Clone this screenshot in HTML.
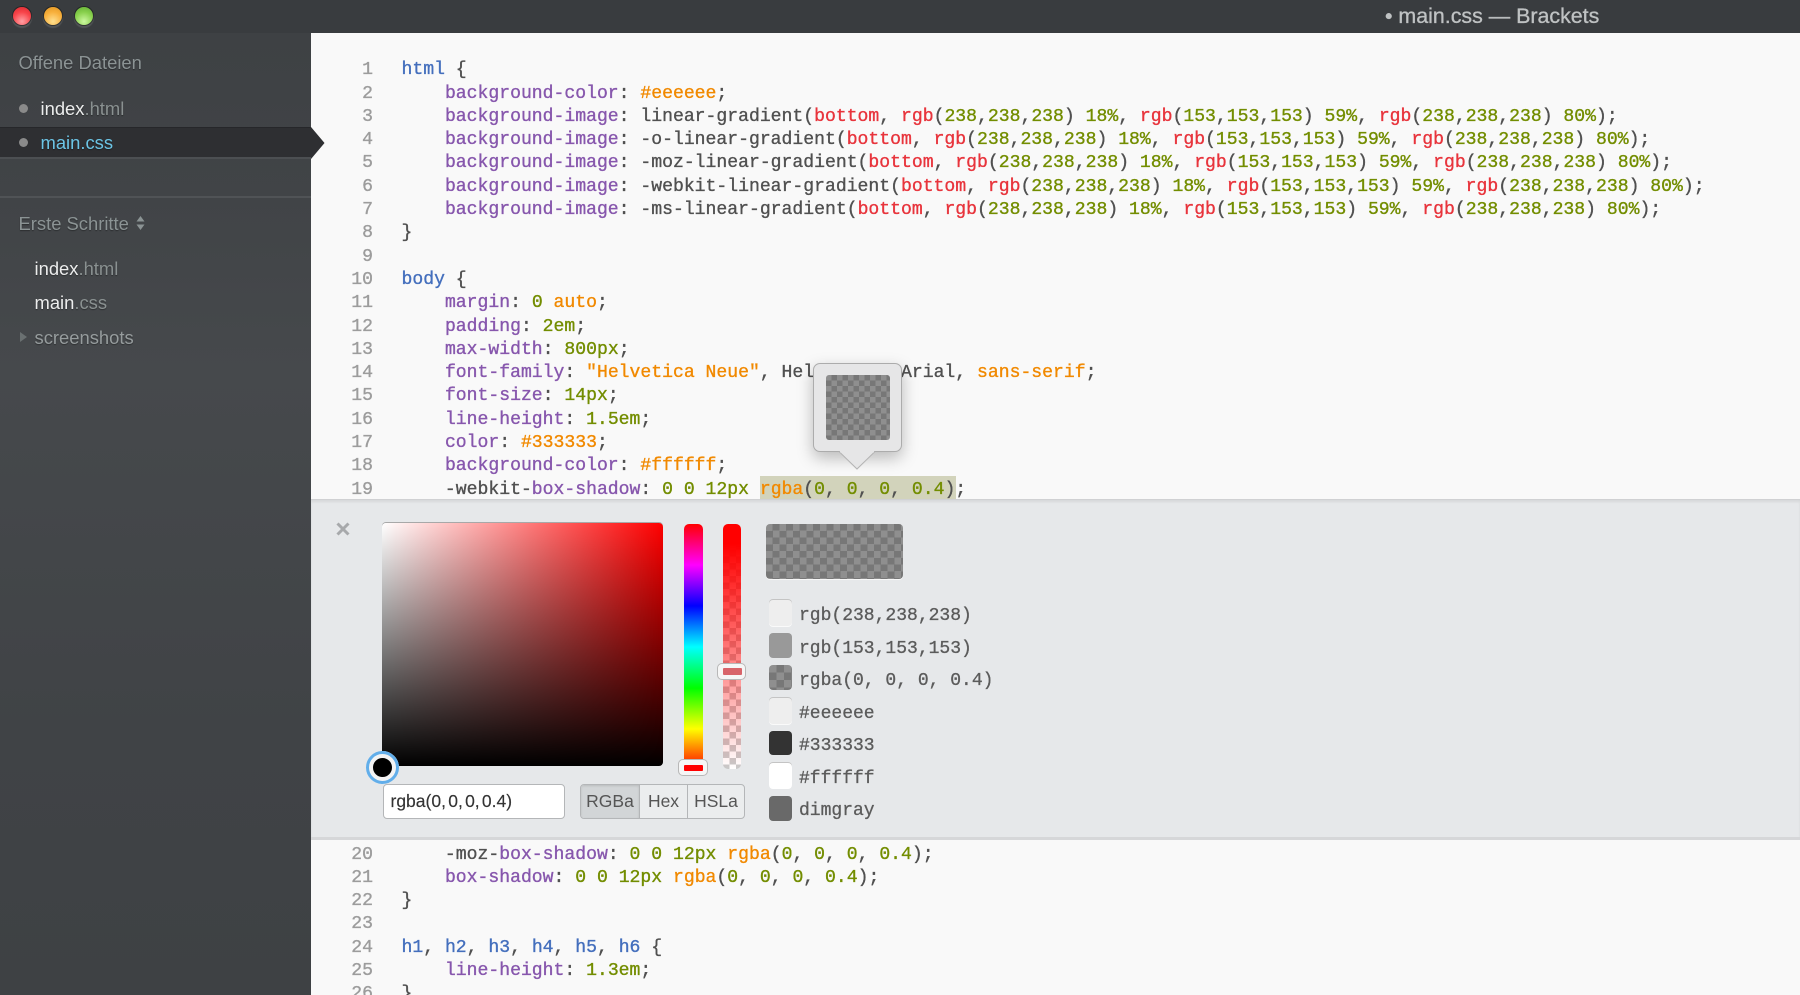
<!DOCTYPE html>
<html><head><meta charset="utf-8"><title>main.css — Brackets</title>
<style>
html,body{margin:0;padding:0;width:1800px;height:995px;overflow:hidden;background:#f9f9f9}
*{box-sizing:border-box}
.a{position:absolute}
#title{left:0;top:0;width:1800px;height:33px;background:#393c3f;z-index:3}
.tl{position:absolute;top:7px;width:18px;height:18px;border-radius:50%;box-shadow:0 0 0 1px rgba(0,0,0,.4),0 2px 1px 1px rgba(255,255,255,.13)}
#side{left:0;top:33px;width:311px;height:962px;background:linear-gradient(#3e4144 0,#414447 165px,#46494c 340px,#404346 700px,#3e4144 100%);font-family:"Liberation Sans",sans-serif;font-size:18.4px;z-index:2}
.s{position:absolute;white-space:pre;line-height:24px;height:24px;text-shadow:0 1px 1px rgba(0,0,0,.35)}
.h{color:#8b9394}.w{color:#eceded}.g{color:#8a9191}
#code,#code2{font-family:"Liberation Mono",monospace;font-size:18.1px;color:#505050;-webkit-text-stroke:.35px}
.l{position:absolute;left:0;height:24px;line-height:24px;white-space:pre}
.ln{position:absolute;left:332px;width:41px;text-align:right;color:#9c9c9c;height:24px;line-height:24px}
.c{left:401.5px}
.p{color:#8757ad}.t{color:#446fbd}.n{color:#738d00}.o{color:#f18900}.r{color:#e8343c}
#panel{left:311px;top:499px;width:1489px;height:341px;background:#e6e8ea;border-top:1px solid #d0d1d3;box-shadow:inset 0 2px 2px rgba(0,0,0,.07);border-bottom:3px solid #d6d7d9;z-index:1}
.sw{position:absolute;left:769px;width:23px;border-radius:4px}
.st{position:absolute;left:799px;font-family:"Liberation Mono",monospace;font-size:18px;color:#5b5b5b;white-space:pre;line-height:24px;height:24px;-webkit-text-stroke:.3px}
.chk{background-color:#8f8f8f;background-image:conic-gradient(#777 25%,transparent 0 50%,#777 0 75%,transparent 0)}
</style></head><body>

<div class="a" id="title">
 <div class="tl" style="left:13px;background:radial-gradient(circle at 50% 80%,#ffa0a4,#f8444a 55%,#d8282e)"></div>
 <div class="tl" style="left:44px;background:radial-gradient(circle at 50% 80%,#ffe090,#f8b03c 55%,#e09420)"></div>
 <div class="tl" style="left:75px;background:radial-gradient(circle at 50% 80%,#ccf8a0,#88d04c 55%,#60ac34)"></div>
 <div class="a" style="left:1385px;top:4px;font:21.4px/24px 'Liberation Sans',sans-serif;color:#bfc2c3;white-space:pre;-webkit-text-stroke:.3px">• main.css — Brackets</div>
</div>

<div class="a" id="side">
 <div class="s h" style="left:18.5px;top:18px">Offene Dateien</div>
 <div class="a" style="left:18.5px;top:71px;width:9px;height:9px;border-radius:50%;background:#8a8a8a"></div>
 <div class="s" style="left:40.5px;top:64px"><span class="w">index</span><span class="g">.html</span></div>
 <div class="a" style="left:0;top:94px;width:311px;height:32px;background:#2e2f32;border-top:1px solid #26272a;border-bottom:2px solid #4c4f52;background-clip:border-box"></div>
 <svg class="a" style="left:311px;top:94px" width="14" height="32"><path d="M0 0L13.5 16L0 32Z" fill="#2e2f32"/></svg>
 <div class="a" style="left:18.5px;top:105px;width:9px;height:9px;border-radius:50%;background:#8a8a8a"></div>
 <div class="s" style="left:40.5px;top:98px;color:#6cc5e6">main.css</div>
 <div class="a" style="left:0;top:163px;width:311px;height:2px;background:#505356"></div>
 <div class="s h" style="left:18.5px;top:179px">Erste Schritte</div>
 <svg class="a" style="left:136px;top:183px" width="9" height="15"><path d="M4.5 0L8.5 5.5H.5ZM4.5 14L.5 8.5H8.5Z" fill="#8b9394"/></svg>
 <div class="s" style="left:34.5px;top:224px"><span class="w">index</span><span class="g">.html</span></div>
 <div class="s" style="left:34.5px;top:258px"><span class="w">main</span><span class="g">.css</span></div>
 <svg class="a" style="left:20px;top:298px" width="8" height="12"><path d="M0 1L7 6L0 11Z" fill="#6a7071"/></svg>
 <div class="s g" style="left:34.5px;top:292.5px;color:#969c9d">screenshots</div>
</div>

<div class="a" id="code" style="left:0;top:1.3px;width:1800px;height:497.7px;overflow:hidden">
<span class="ln" style="top:57px">1</span><div class="l c" style="top:57px"><span class="t">html</span> {</div>
<span class="ln" style="top:80.3px">2</span><div class="l c" style="top:80.3px">    <span class="p">background-color</span>: <span class="o">#eeeeee</span>;</div>
<span class="ln" style="top:103.6px">3</span><div class="l c" style="top:103.6px">    <span class="p">background-image</span>: linear-gradient(<span class="r">bottom</span>, <span class="r">rgb</span>(<span class="n">238</span>,<span class="n">238</span>,<span class="n">238</span>) <span class="n">18%</span>, <span class="r">rgb</span>(<span class="n">153</span>,<span class="n">153</span>,<span class="n">153</span>) <span class="n">59%</span>, <span class="r">rgb</span>(<span class="n">238</span>,<span class="n">238</span>,<span class="n">238</span>) <span class="n">80%</span>);</div>
<span class="ln" style="top:126.9px">4</span><div class="l c" style="top:126.9px">    <span class="p">background-image</span>: -o-linear-gradient(<span class="r">bottom</span>, <span class="r">rgb</span>(<span class="n">238</span>,<span class="n">238</span>,<span class="n">238</span>) <span class="n">18%</span>, <span class="r">rgb</span>(<span class="n">153</span>,<span class="n">153</span>,<span class="n">153</span>) <span class="n">59%</span>, <span class="r">rgb</span>(<span class="n">238</span>,<span class="n">238</span>,<span class="n">238</span>) <span class="n">80%</span>);</div>
<span class="ln" style="top:150.2px">5</span><div class="l c" style="top:150.2px">    <span class="p">background-image</span>: -moz-linear-gradient(<span class="r">bottom</span>, <span class="r">rgb</span>(<span class="n">238</span>,<span class="n">238</span>,<span class="n">238</span>) <span class="n">18%</span>, <span class="r">rgb</span>(<span class="n">153</span>,<span class="n">153</span>,<span class="n">153</span>) <span class="n">59%</span>, <span class="r">rgb</span>(<span class="n">238</span>,<span class="n">238</span>,<span class="n">238</span>) <span class="n">80%</span>);</div>
<span class="ln" style="top:173.5px">6</span><div class="l c" style="top:173.5px">    <span class="p">background-image</span>: -webkit-linear-gradient(<span class="r">bottom</span>, <span class="r">rgb</span>(<span class="n">238</span>,<span class="n">238</span>,<span class="n">238</span>) <span class="n">18%</span>, <span class="r">rgb</span>(<span class="n">153</span>,<span class="n">153</span>,<span class="n">153</span>) <span class="n">59%</span>, <span class="r">rgb</span>(<span class="n">238</span>,<span class="n">238</span>,<span class="n">238</span>) <span class="n">80%</span>);</div>
<span class="ln" style="top:196.8px">7</span><div class="l c" style="top:196.8px">    <span class="p">background-image</span>: -ms-linear-gradient(<span class="r">bottom</span>, <span class="r">rgb</span>(<span class="n">238</span>,<span class="n">238</span>,<span class="n">238</span>) <span class="n">18%</span>, <span class="r">rgb</span>(<span class="n">153</span>,<span class="n">153</span>,<span class="n">153</span>) <span class="n">59%</span>, <span class="r">rgb</span>(<span class="n">238</span>,<span class="n">238</span>,<span class="n">238</span>) <span class="n">80%</span>);</div>
<span class="ln" style="top:220.1px">8</span><div class="l c" style="top:220.1px">}</div>
<span class="ln" style="top:243.4px">9</span>
<span class="ln" style="top:266.7px">10</span><div class="l c" style="top:266.7px"><span class="t">body</span> {</div>
<span class="ln" style="top:290px">11</span><div class="l c" style="top:290px">    <span class="p">margin</span>: <span class="n">0</span> <span class="o">auto</span>;</div>
<span class="ln" style="top:313.3px">12</span><div class="l c" style="top:313.3px">    <span class="p">padding</span>: <span class="n">2em</span>;</div>
<span class="ln" style="top:336.6px">13</span><div class="l c" style="top:336.6px">    <span class="p">max-width</span>: <span class="n">800px</span>;</div>
<span class="ln" style="top:359.9px">14</span><div class="l c" style="top:359.9px">    <span class="p">font-family</span>: <span class="o">"Helvetica Neue"</span>, Helvetica, Arial, <span class="o">sans-serif</span>;</div>
<span class="ln" style="top:383.2px">15</span><div class="l c" style="top:383.2px">    <span class="p">font-size</span>: <span class="n">14px</span>;</div>
<span class="ln" style="top:406.5px">16</span><div class="l c" style="top:406.5px">    <span class="p">line-height</span>: <span class="n">1.5em</span>;</div>
<span class="ln" style="top:429.8px">17</span><div class="l c" style="top:429.8px">    <span class="p">color</span>: <span class="o">#333333</span>;</div>
<span class="ln" style="top:453.1px">18</span><div class="l c" style="top:453.1px">    <span class="p">background-color</span>: <span class="o">#ffffff</span>;</div>
<div class="a" style="left:760px;top:474.7px;width:196px;height:23px;background:#d2d3bb"></div>
<span class="ln" style="top:476.4px">19</span><div class="l c" style="top:476.4px">    -webkit-<span class="p">box-shadow</span>: <span class="n">0</span> <span class="n">0</span> <span class="n">12px</span> <span class="o">rgba</span>(<span class="n">0</span>, <span class="n">0</span>, <span class="n">0</span>, <span class="n">0.4</span>);</div>
</div>

<div class="a" style="left:813px;top:363px;width:89px;height:89px;background:#e6e6e7;border:1px solid #acacac;border-radius:7px;box-shadow:0 6px 16px rgba(0,0,0,.26);z-index:1"></div>
<svg class="a" style="left:838px;top:450px;z-index:1" width="38" height="20"><path d="M1 1.5L19 19L37 1.5" fill="#e6e6e7" stroke="#b4b4b4" stroke-width="1"/><rect x="2" y="0" width="34" height="2.5" fill="#e6e6e7"/></svg>
<div class="a chk" style="left:825.5px;top:375px;width:64.5px;height:64.5px;border-radius:3px;background-size:11px 11px;z-index:1"></div>

<div class="a" id="panel"></div>
<div style="position:absolute;left:0;top:0;z-index:2">
 <svg class="a" style="left:336px;top:522px" width="14" height="14"><path d="M1.5 1.5L12.5 12.5M12.5 1.5L1.5 12.5" stroke="#a7a9ab" stroke-width="3"/></svg>
 <div class="a" style="left:382px;top:523px;width:281px;height:243px;border-radius:4px;background:linear-gradient(to top,#000,transparent),linear-gradient(to right,#fff,#f00);box-shadow:0 -1px 0 #a8a8a8"></div>
 <div class="a" style="left:684px;top:524px;width:18.5px;height:246px;border-radius:5px;background:linear-gradient(#f00,#f0f 16.7%,#00f 33.3%,#0ff 50%,#0f0 66.7%,#ff0 83.3%,#f00)"></div>
 <div class="a" style="left:678px;top:759px;width:30px;height:17px;border-radius:5px;background:#f6f6f6;border:1px solid #b8b8b8;"><div class="a" style="left:5px;top:5px;width:18.5px;height:6px;background:#f00;border-radius:1px"></div></div>
 <div class="a" style="left:722.5px;top:524px;width:18.5px;height:245px;border-radius:5px;background:linear-gradient(#f00 8%,rgba(255,0,0,0) 100%),conic-gradient(#c9c9c9 25%,#fff 0 50%,#c9c9c9 0 75%,#fff 0) 0 0/13px 13px"></div>
 <div class="a" style="left:717px;top:663px;width:29px;height:17px;border-radius:5px;background:#f6f6f6;border:1px solid #b8b8b8"><div class="a" style="left:4.5px;top:4px;width:19px;height:7px;background:#d8646a;border-radius:1px"></div></div>
 <div class="a" style="left:366px;top:751px;width:33px;height:33px;border-radius:50%;background:#000;border:7px solid #f4f4f4;outline:3px solid #62aeea;outline-offset:-3px"></div>
 <div class="a" style="left:382.5px;top:784px;width:182px;height:35px;background:#fff;border:1px solid #b4b6b8;border-radius:4px;font:17.5px/33px 'Liberation Sans',sans-serif;color:#333;padding-left:7px;white-space:pre;word-spacing:-2.6px;-webkit-text-stroke:.15px">rgba(0, 0, 0, 0.4)</div>
 <div class="a" style="left:580px;top:784px;width:165px;height:35px;border:1px solid #b4b6b8;border-radius:4px;font:17.5px/33px 'Liberation Sans',sans-serif;color:#555;background:#ebedee;overflow:hidden">
  <div class="a" style="left:0;top:0;width:59px;height:33px;background:#d2d5d7;border-right:1px solid #b4b6b8;text-align:center;box-shadow:inset 0 1px 2px rgba(0,0,0,.12)">RGBa</div>
  <div class="a" style="left:59px;top:0;width:48px;height:33px;border-right:1px solid #b4b6b8;text-align:center">Hex</div>
  <div class="a" style="left:107px;top:0;width:56px;height:33px;text-align:center">HSLa</div>
 </div>
 <div class="a chk" style="left:766px;top:524px;width:137px;height:55px;border-radius:4px;background-size:13.5px 13.5px;box-shadow:0 1px 0 #f7f7f7"></div>

 <div class="sw" style="top:600px;height:26px;background:#eee;box-shadow:0 -1px 0 #c4c4c4,0 1px 0 #fafafa"></div><div class="st" style="top:603.5px">rgb(238,238,238)</div>
 <div class="sw" style="top:633px;height:25px;background:#999"></div><div class="st" style="top:636.5px">rgb(153,153,153)</div>
 <div class="sw chk" style="top:665px;height:25px;background-size:15px 15px"></div><div class="st" style="top:669px">rgba(0, 0, 0, 0.4)</div>
 <div class="sw" style="top:698px;height:26px;background:#eee;box-shadow:0 -1px 0 #c4c4c4,0 1px 0 #fafafa"></div><div class="st" style="top:701.5px">#eeeeee</div>
 <div class="sw" style="top:731px;height:24px;background:#333"></div><div class="st" style="top:734px">#333333</div>
 <div class="sw" style="top:763px;height:26px;background:#fff;box-shadow:0 -1px 0 #c4c4c4"></div><div class="st" style="top:766.5px">#ffffff</div>
 <div class="sw" style="top:796px;height:25px;background:#696969"></div><div class="st" style="top:799px">dimgray</div>
</div>

<div class="a" id="code2" style="left:0;top:840px;width:1800px;height:155px;overflow:hidden">
<span class="ln" style="top:2.5px">20</span><div class="l c" style="top:2.5px">    -moz-<span class="p">box-shadow</span>: <span class="n">0</span> <span class="n">0</span> <span class="n">12px</span> <span class="o">rgba</span>(<span class="n">0</span>, <span class="n">0</span>, <span class="n">0</span>, <span class="n">0.4</span>);</div>
<span class="ln" style="top:25.8px">21</span><div class="l c" style="top:25.8px">    <span class="p">box-shadow</span>: <span class="n">0</span> <span class="n">0</span> <span class="n">12px</span> <span class="o">rgba</span>(<span class="n">0</span>, <span class="n">0</span>, <span class="n">0</span>, <span class="n">0.4</span>);</div>
<span class="ln" style="top:49.1px">22</span><div class="l c" style="top:49.1px">}</div>
<span class="ln" style="top:72.4px">23</span>
<span class="ln" style="top:95.7px">24</span><div class="l c" style="top:95.7px"><span class="t">h1</span>, <span class="t">h2</span>, <span class="t">h3</span>, <span class="t">h4</span>, <span class="t">h5</span>, <span class="t">h6</span> {</div>
<span class="ln" style="top:119px">25</span><div class="l c" style="top:119px">    <span class="p">line-height</span>: <span class="n">1.3em</span>;</div>
<span class="ln" style="top:142.3px">26</span><div class="l c" style="top:142.3px">}</div>
</div>
</body></html>
